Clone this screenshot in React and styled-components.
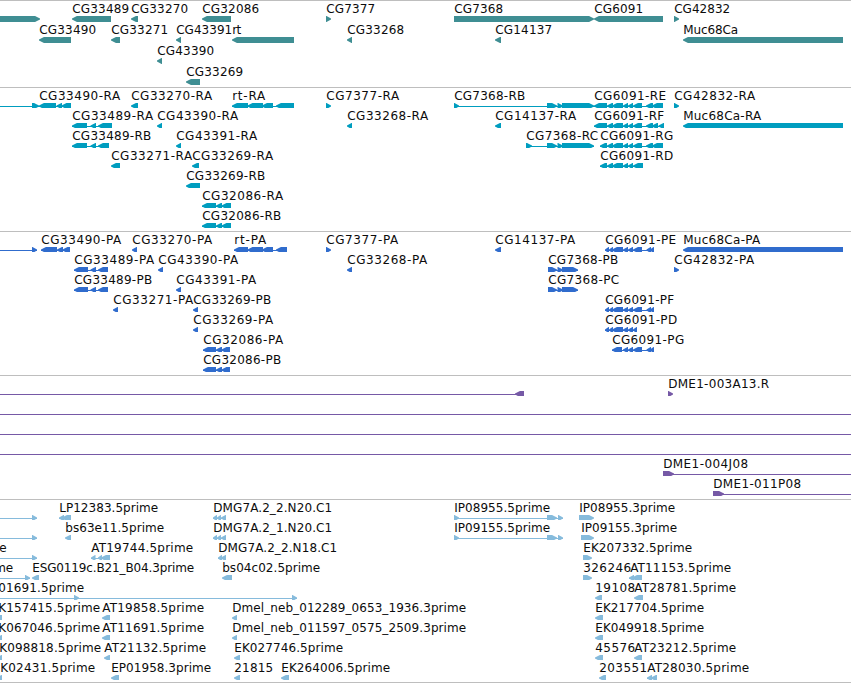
import React from "react";
import styled, { createGlobalStyle } from "styled-components";

const GlobalStyle = createGlobalStyle`
  body { margin: 0; background: #fff; overflow: hidden; }
`;

const Browser = styled.main`
  width: 851px;
  height: 683px;
  overflow: hidden;
  display: flex;
  flex-direction: column;
  background: #fff;
  border-bottom: 1px solid #bebebe;
  box-sizing: border-box;
`;

const Track = styled.section`
  flex: none;
  height: ${(p) => p.$height}px;
  box-sizing: border-box;
  border-top: 1px solid #bebebe;
  display: grid;
  grid-auto-rows: ${(p) => p.$pitch}px;
  color: ${(p) => p.$color};
`;

const Lane = styled.svg`
  display: block;
  width: 851px;
  height: ${(p) => p.$pitch}px;
  overflow: hidden;
  fill: currentColor;
`;

const Label = styled.text`
  fill: #0c0c0c;
  font-family: "DejaVu Sans", sans-serif;
  font-size: 12px;
  white-space: pre;
`;

const TOP = 15;
const BOTTOM = 21;
const MID = 18;

function Exon({ from, to, right }) {
  const head = Math.min(5.5, to - from);
  const tip = right ? to : from;
  const base = right ? from : to;
  const back = right ? -1 : 1;
  const points = [
    [base, TOP],
    [tip + back * head * 0.9, TOP],
    [tip, MID - 0.6],
    [tip, MID + 0.6],
    [tip + back * head * 0.9, BOTTOM],
    [base, BOTTOM],
  ];
  return <polygon points={points.map((p) => p.join(",")).join(" ")} />;
}

function Feature({ name, at, exons = [], right, span }) {
  const line = span || (exons.length > 1 ? [exons[0][0], exons[exons.length - 1][1]] : null);
  return (
    <g>
      {line && <rect x={line[0]} y={MID} width={line[1] - line[0]} height="1" />}
      {exons.map(([from, to], i) => (
        <Exon key={i} from={from} to={to} right={right} />
      ))}
      {name && (
        <Label x={at[0] + 0.2} y="12" textLength={at[1] - at[0]} lengthAdjust="spacing">
          {name}
        </Label>
      )}
    </g>
  );
}

// Features pointing left (L) or right (R): label, [label start, label end], exons, connector span
const L = (name, at, exons, span) => ({ name, at, exons, span });
const R = (name, at, exons, span) => ({ name, at, exons, span, right: true });

const ra33489 = [[72, 87], [90.5, 96], [98, 112]];
const rb33489 = [[72, 87], [90.5, 96], [98, 109]];
const p33489 = [[74, 88], [90.5, 96], [98, 108]];
const r32086 = [[202, 216], [216, 222], [221.5, 231]];
const p32086 = [[203, 216], [216, 222], [221.5, 230]];
const p7368 = [[548, 557], [557.5, 563], [562, 578]];
const mid6091 = [[607, 613], [612, 623], [623, 628], [628, 633]];
const tail6091 = [[633, 642], [646, 653], [652, 663]];
const p6091 = [[605, 609], [609, 613], [612, 623], [623, 628], [628, 633]];
const pTail6091 = [[633, 642], [646.5, 651], [650, 654]];
const ip5 = [[454, 459], [547, 557], [558, 563]];
const dmg = [[213, 217], [217, 221], [221, 226]];

const tracks = [
  {
    id: "genes", color: "#3f8e93", height: 87, pitch: 21,
    lanes: [
      [
        R(null, null, [[-5, 40]]),
        L("CG33489", [72, 129], [[72, 111]]),
        L("CG33270", [131, 188], [[131, 138]]),
        L("CG32086", [202, 259], [[202, 231]]),
        R("CG7377", [326, 375], [[326, 331]]),
        R("CG7368", [454, 503], [[454, 594]]),
        L("CG6091", [594, 643], [[594, 663]]),
        R("CG42832", [674, 730], [[674, 679]]),
      ],
      [
        L("CG33490", [39, 96], [[39, 71]]),
        L("CG33271", [111, 168], [[111, 120]]),
        L("CG43391", [176, 232], [[176, 181]]),
        L("rt", [232, 241], [[232, 294]]),
        L("CG33268", [347, 404], [[347, 352]]),
        L("CG14137", [495, 552], [[495, 501]]),
        L("Muc68Ca", [683, 738], [[683, 843]]),
      ],
      [L("CG43390", [157, 214], [[157, 162]])],
      [L("CG33269", [186, 243], [[186, 200]])],
    ],
  },
  {
    id: "transcripts", color: "#009dbf", height: 144, pitch: 20,
    lanes: [
      [
        R(null, null, [[32, 39]], [0, 39]),
        L("CG33490-RA", [39, 120], [[39, 56], [56.5, 62], [61.5, 71]]),
        L("CG33270-RA", [131, 212], [[131, 138]]),
        L("rt-RA", [232, 265], [[232, 248], [247.5, 263], [262, 273], [276, 294]]),
        R("CG7377-RA", [326, 399], [[326, 331]]),
        R("CG7368-RB", [454, 525], [[454, 459], [547, 557], [557.5, 563], [562, 594]]),
        L("CG6091-RE", [594, 666], [[594, 607], ...mid6091, ...tail6091]),
        R("CG42832-RA", [674, 755], [[674, 679]]),
      ],
      [
        L("CG33489-RA", [72, 153], ra33489),
        L("CG43390-RA", [157, 238], [[157, 162]]),
        L("CG33268-RA", [347, 428], [[347, 352]]),
        L("CG14137-RA", [495, 576], [[495, 501]]),
        L("CG6091-RF", [594, 664], [[594, 607], ...mid6091, [633, 642], [646, 653], [652, 658], [658.5, 664]]),
        L("Muc68Ca-RA", [683, 761], [[683, 843]]),
      ],
      [
        L("CG33489-RB", [72, 151], rb33489),
        L("CG43391-RA", [176, 257], [[176, 181]]),
        R("CG7368-RC", [526, 598], [[526, 532], [547, 557], [557.5, 563], [562, 594]]),
        L("CG6091-RG", [600, 673], [[600, 607], ...mid6091, ...tail6091]),
      ],
      [
        L("CG33271-RA", [111, 192], [[111, 120]]),
        L("CG33269-RA", [192, 273], [[192, 199]]),
        L("CG6091-RD", [600, 673], [[600, 607], ...mid6091, [633, 643]]),
      ],
      [L("CG33269-RB", [186, 265], [[186, 200]])],
      [L("CG32086-RA", [202, 283], r32086)],
      [L("CG32086-RB", [202, 281], r32086)],
    ],
  },
  {
    id: "proteins", color: "#306ccd", height: 144, pitch: 20,
    lanes: [
      [
        R(null, null, [[32, 37]], [0, 37]),
        L("CG33490-PA", [41, 121], [[41, 57], [57, 63], [62.5, 70]]),
        L("CG33270-PA", [132, 212], [[132, 137]]),
        L("rt-PA", [234, 266], [[234, 248], [247.5, 263], [262, 273], [276, 287]]),
        R("CG7377-PA", [326, 398], [[326, 331]]),
        L("CG14137-PA", [495, 575], [[495, 501]]),
        L("CG6091-PE", [605, 676], [...p6091, ...pTail6091]),
        L("Muc68Ca-PA", [683, 760], [[683, 843]]),
      ],
      [
        L("CG33489-PA", [74, 154], p33489),
        L("CG43390-PA", [158, 238], [[158, 163]]),
        L("CG33268-PA", [347, 427], [[347, 352]]),
        R("CG7368-PB", [548, 618], p7368),
        R("CG42832-PA", [674, 754], [[674, 679]]),
      ],
      [
        L("CG33489-PB", [74, 152], p33489),
        L("CG43391-PA", [176, 256], [[176, 181]]),
        R("CG7368-PC", [548, 619], p7368),
      ],
      [
        L("CG33271-PA", [113, 193], [[113, 118]]),
        L("CG33269-PB", [193, 271], [[193, 198]]),
        L("CG6091-PF", [605, 674], [...p6091, ...pTail6091]),
      ],
      [
        L("CG33269-PA", [193, 273], [[193, 198]]),
        L("CG6091-PD", [605, 677], [...p6091, [633, 637]]),
      ],
      [
        L("CG32086-PA", [203, 283], p32086),
        L("CG6091-PG", [612, 684], [[612, 622], [623, 628], [628, 633], ...pTail6091]),
      ],
      [L("CG32086-PB", [203, 281], p32086)],
    ],
  },
  {
    id: "bac-ends", color: "#7659a6", height: 124, pitch: 20,
    lanes: [
      [
        L(null, null, [[515, 524]], [0, 524]),
        R("DME1-003A13.R", [668, 769], [[668, 673]]),
      ],
      [L(null, null, [], [0, 851])],
      [L(null, null, [], [0, 851])],
      [L(null, null, [], [0, 851])],
      [R("DME1-004J08", [663, 748], [[663, 674]], [663, 851])],
      [R("DME1-011P08", [713, 801], [[713, 724]], [713, 851])],
    ],
  },
  {
    id: "est", color: "#86bbdc", height: 183, pitch: 20,
    lanes: [
      [
        R(null, null, [[32, 37]], [0, 37]),
        L("LP12383.5prime", [59, 158], [[59, 64], [62, 71]]),
        L("DMG7A.2_2.N20.C1", [213, 332], dmg),
        R("IP08955.5prime", [454, 550], ip5),
        R("IP08955.3prime", [579, 675], [[579, 594]]),
      ],
      [
        R(null, null, [[32, 37]], [0, 37]),
        L("bs63e11.5prime", [65, 164], [[65, 71]]),
        L("DMG7A.2_1.N20.C1", [213, 332], dmg),
        R("IP09155.5prime", [454, 550], ip5),
        R("IP09155.3prime", [581, 677], [[581, 594]]),
      ],
      [
        R("e", [-1, 7], [[32, 37]], [0, 37]),
        L("AT19744.5prime", [91, 193], [[91, 95.5], [98, 102], [101, 110]]),
        L("DMG7A.2_2.N18.C1", [218, 337], [[218, 222], [221, 226]]),
        R("EK207332.5prime", [583, 692], [[583, 592]]),
      ],
      [
        R("me", [-6, 13], [[25, 30]], [0, 30]),
        L("ESG0119c.B21_B04.3prime", [32, 194], [[32, 39]]),
        L("bs04c02.5prime", [222, 320], [[222, 232]]),
        R("326246", [583, 631], [[583, 592]]),
        L("AT11153.5prime", [630, 731], [[629, 634], [632, 642]]),
      ],
      [
        R("01691.5prime", [-2, 84], [[74, 79], [292, 297]], [0, 297]),
        L("19108", [595, 635], [[595, 602]]),
        L("AT28781.5prime", [634, 736], [[634, 643]]),
      ],
      [
        L("K157415.5prime", [-2, 100], [[-6, 2]]),
        L("AT19858.5prime", [102, 204], [[102, 110]]),
        L("Dmel_neb_012289_0653_1936.3prime", [232, 466], [[232, 237]]),
        L("EK217704.5prime", [595, 704], [[595, 603]]),
      ],
      [
        L("K067046.5prime", [-2, 100], [[-3, 2]]),
        L("AT11691.5prime", [102, 204], [[102, 110]]),
        L("Dmel_neb_011597_0575_2509.3prime", [232, 466], [[232, 237]]),
        L("EK049918.5prime", [595, 704], [[595, 603]]),
      ],
      [
        L("K098818.5prime", [-1, 101], [[-3, 2]]),
        L("AT21132.5prime", [104, 206], [[104, 110]]),
        L("EK027746.5prime", [234, 343], [[234, 240]]),
        L("45576", [595, 635], [[595, 603]]),
        L("AT23212.5prime", [634, 736], [[634, 642]]),
      ],
      [
        L("K02431.5prime", [0, 95], [[-3, 2]]),
        L("EP01958.3prime", [111, 211], [[111, 119]]),
        L("21815", [234, 273], [[234, 240]]),
        L("EK264006.5prime", [281, 390], [[281, 289]]),
        L("203551", [599, 647], [[599, 606]]),
        L("AT28030.5prime", [647, 749], [[647, 652], [651, 657]]),
      ],
    ],
  },
];

export default function App() {
  return (
    <>
      <GlobalStyle />
      <Browser>
        {tracks.map((t) => (
          <Track key={t.id} $height={t.height} $pitch={t.pitch} $color={t.color}>
            {t.lanes.map((lane, i) => (
              <Lane key={i} $pitch={t.pitch}>
                {lane.map((f, j) => (
                  <Feature key={j} {...f} />
                ))}
              </Lane>
            ))}
          </Track>
        ))}
      </Browser>
    </>
  );
}
